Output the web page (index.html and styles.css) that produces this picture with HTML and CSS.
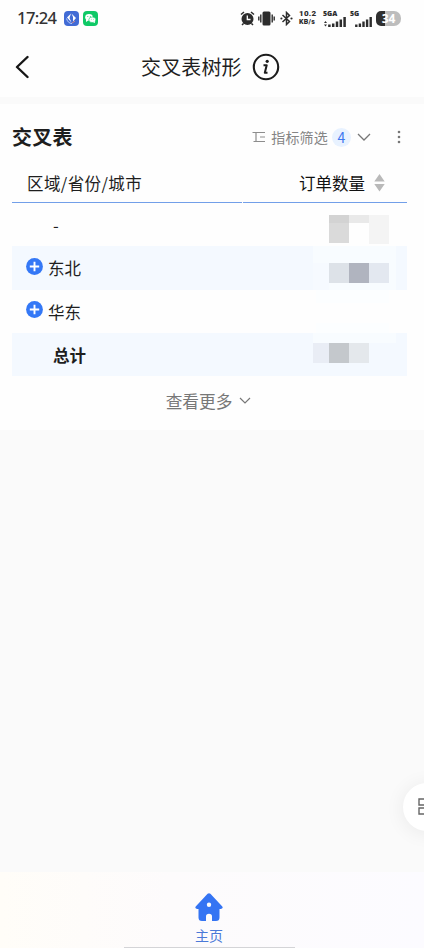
FILE: index.html
```html
<!DOCTYPE html>
<html lang="zh-CN">
<head>
<meta charset="utf-8">
<meta name="viewport" content="width=device-width, initial-scale=1">
<title>交叉表树形</title>
<link rel="stylesheet" href="styles.css">
</head>
<body>
<div class="app">
  <header class="top">
    <div class="status">
      <span class="time">17:24</span>
      <svg class="app-icon" width="15" height="15" viewBox="0 0 15 15"><rect width="15" height="15" rx="4" fill="#416bd5"/><path d="M7 2.5 3 6.5 7.5 11.5 5.5 7ZM7.5 2.5 12 7 9 10.5 9 6Z" fill="#fff"/><path d="M2.5 7.5Q4 12.5 8 12.5" fill="none" stroke="#b9cdfa"/><path d="m8 12 3-2" stroke="#d68a8c"/></svg>
      <svg class="app-icon" width="15" height="15" viewBox="0 0 15 15"><rect width="15" height="15" rx="4" fill="#0fc966"/><ellipse cx="6" cy="6.3" rx="3.8" ry="3.2" fill="#fff"/><path d="m3 8 0 3 3-2Z" fill="#fff"/><ellipse cx="9.3" cy="8.8" rx="3.5" ry="2.8" fill="#fff" stroke="#0fc966" stroke-width=".6"/><path d="m10 11 2 1 0-2Z" fill="#fff"/><g fill="#0fc966"><circle cx="4.8" cy="5.6" r=".5"/><circle cx="7.3" cy="5.6" r=".5"/><circle cx="8.3" cy="8.2" r=".4"/><circle cx="10.4" cy="8.2" r=".4"/></g></svg>
      <div class="indicators">
        <svg width="15" height="15" viewBox="0 0 15 15"><circle cx="7.5" cy="8" r="6" fill="#2c2c2c"/><path d="M1 3.5 4 1M14 3.5 11 1M3.5 12.5 2 14M11.5 12.5 13 14" stroke="#2c2c2c" stroke-width="1.5" fill="none"/><path d="M7.3 4.5V8.5H10.5" stroke="#fff" stroke-width="1.3" fill="none"/></svg>
        <svg class="vibrate" width="17" height="15" viewBox="0 0 17 15"><rect x="4.5" y=".5" width="8" height="14" rx="1.5" fill="#2c2c2c"/><path d="M2.8 3.5V11.5M14.2 3.5V11.5M.8 5.5V9.5M16.2 5.5V9.5" stroke="#2c2c2c" stroke-width="1.4"/></svg>
        <svg class="bt" width="13" height="15" viewBox="0 0 13 15"><path d="M2.5 4 9.5 10.5 6.5 13.5V1.5L9.5 4.5 2.5 11" fill="none" stroke="#2c2c2c" stroke-width="1.5"/><circle cx="1.4" cy="7.5" r="1.1" fill="#2c2c2c"/><circle cx="11.5" cy="7.5" r="1.1" fill="#2c2c2c"/></svg>
        <span class="speed"><b>10.2</b><b class="unit">KB/s</b></span>
        <span class="signal first"><b>5GA</b>
          <svg width="22" height="11" viewBox="0 0 22 11"><path d="M0 7 1.5 5 3 7ZM0 8.5l1.5 2 1.5-2Z" fill="#2c2c2c"/><path d="M5.4 11V8.5M9.2 11V7.5M13 11V5.5M16.8 11V3.5M20.6 11V1" stroke="#2c2c2c" stroke-width="2.5"/></svg>
        </span>
        <span class="signal second"><b>5G</b>
          <svg width="17" height="11" viewBox="0 0 17 11"><path d="M1.3 11V8.5M4.9 11V7.5M8.5 11V5.5M12.1 11V3.5M15.7 11V1" stroke="#2c2c2c" stroke-width="2.4"/></svg>
        </span>
        <span class="battery">34</span>
      </div>
    </div>
    <div class="nav">
      <svg class="back" width="14" height="24" viewBox="0 0 14 24"><path d="M12.5 2 2 12 12.5 22" fill="none" stroke="#161616" stroke-width="2.4" stroke-linecap="round" stroke-linejoin="round"/></svg>
      <h1>交叉表树形</h1>
      <svg class="info" width="28" height="28" viewBox="0 0 28 28"><circle cx="14" cy="14" r="12.2" fill="none" stroke="#1c1c1c" stroke-width="2.1"/><circle cx="15.2" cy="8.3" r="1.6" fill="#1c1c1c"/><path d="M11.5 12.2H14.7L12.8 19.8H15.5" fill="none" stroke="#1c1c1c" stroke-width="2" stroke-linejoin="round"/></svg>
    </div>
  </header>

  <main class="card">
    <div class="card-head">
      <h2>交叉表</h2>
      <div class="filter">
        <svg width="14" height="12" viewBox="0 0 14 12"><path d="M.5 1.5H13M4 1.5V10.5M1.5 10.5H13M8 6H13" fill="none" stroke="#8d8d8d" stroke-width="1.2"/></svg>
        <span class="filter-label">指标筛选</span>
        <span class="count">4</span>
        <svg class="chev" width="14" height="8" viewBox="0 0 14 8"><path d="M1 1 7 7 13 1" fill="none" stroke="#777" stroke-width="1.3"/></svg>
      </div>
      <svg class="more-menu" width="4" height="14" viewBox="0 0 4 14" fill="#777"><circle cx="2" cy="2" r="1.3"/><circle cx="2" cy="7" r="1.3"/><circle cx="2" cy="12" r="1.3"/></svg>
    </div>

    <div class="table">
      <div class="row head">
        <div class="cell path">区域/省份/城市</div>
        <div class="cell measure">订单数量
          <svg width="11" height="18" viewBox="0 0 11 18" fill="#b9b9b9"><path d="M5.5 0 10.7 7.5H.3ZM5.5 17.5.3 10H10.7Z"/></svg>
        </div>
      </div>
      <div class="row"><div class="cell indent">-</div>
        <svg class="mask" width="94" height="43" shape-rendering="crispEdges"><path d="M16 12h20v28H16z" fill="#dadada"/><path d="M16 12h20v8H16z" fill="#d3d3d3"/><path d="M36 12h20v8H36z" fill="#e9e9e9"/><path d="M56 12h20v29H56z" fill="#f4f4f4"/></svg>
      </div>
      <div class="row tinted"><div class="cell">
        <svg class="plus" width="17" height="17" viewBox="0 0 17 17"><circle cx="8.5" cy="8.5" r="8.4" fill="#3478f6"/><path d="M8.5 3.8V13.2M3.8 8.5H13.2" stroke="#fff" stroke-width="1.9"/></svg>东北</div>
        <svg class="mask" width="94" height="44" shape-rendering="crispEdges"><path d="M0 0h83v44H0z" fill="#f8fcff"/><path d="M0 17h16v27H0z" fill="#f6faff"/><path d="M16 17h20v20H16z" fill="#dde2e8"/><path d="M36 17h20v20H36z" fill="#b0b4bf"/><path d="M56 17h20v20H56z" fill="#e3e8f0"/></svg>
      </div>
      <div class="row"><div class="cell">
        <svg class="plus" width="17" height="17" viewBox="0 0 17 17"><circle cx="8.5" cy="8.5" r="8.4" fill="#3478f6"/><path d="M8.5 3.8V13.2M3.8 8.5H13.2" stroke="#fff" stroke-width="1.9"/></svg>华东</div>
        <svg class="mask" width="94" height="43" shape-rendering="crispEdges"><path d="M3 0h73v13H3zM3 33h73v10H3z" fill="#fcfeff"/></svg>
      </div>
      <div class="row tinted"><div class="cell indent total">总计</div>
        <svg class="mask" width="94" height="43" shape-rendering="crispEdges"><path d="M0 0h83v10H0z" fill="#f8fcff"/><path d="M0 10h16v20H0z" fill="#e9edf5"/><path d="M16 10h20v20H16z" fill="#c4c8cc"/><path d="M36 10h20v20H36z" fill="#e4e8ec"/></svg>
      </div>
    </div>
    <div class="view-more">查看更多
      <svg width="12" height="8" viewBox="0 0 12 8"><path d="m1 1 5 5 5-5" fill="none" stroke="#777" stroke-width="1.2"/></svg>
    </div>
  </main>

  <button class="float" aria-label="菜单">
    <svg width="18" height="18" viewBox="0 0 18 18" fill="none" stroke="#666" stroke-width="1.4"><path d="M1 1h6v6H1zM11 1h6v6h-6zM1 10h6v6H1zM11 10h6v6h-6z"/></svg>
  </button>

  <nav class="tabbar">
    <svg width="28" height="28" viewBox="0 0 28 28"><path fill="#3574f3" fill-rule="evenodd" d="M12.6.8Q14 -.5 15.4.8L27.3 13.4Q28.6 15.4 26 16H24.5V24.5Q24.5 28 21 28H17V23.5Q17 20.7 14 20.7T11 23.5V28H7Q3.5 28 3.5 24.5V16H2Q-.6 15.4.7 13.4ZM14 9.6a2.2 2.2 0 1 0 0 4.4 2.2 2.2 0 1 0 0-4.4Z"/></svg>
    <span>主页</span>
    <i class="home-line"></i>
  </nav>
</div>
</body>
</html>
```
FILE: styles.css
```css
* { box-sizing: border-box; }

body {
  margin: 0;
  font-family: "Noto Sans CJK SC", sans-serif;
  color: #1e1e1e;
}

h1, h2 { margin: 0; }
svg { display: block; flex: none; }

.app {
  position: relative;
  display: flex;
  flex-direction: column;
  height: 948px;
  overflow: hidden;
  background: #fafafa;
}

.top { height: 97px; background: #fefefe; }

.status {
  display: flex;
  align-items: center;
  height: 36px;
  padding-left: 17px;
}

.time {
  width: 47px;
  font: 500 16.5px/20px "Noto Sans", sans-serif;
  color: #333;
  letter-spacing: -0.55px;
}

.app-icon { margin-right: 4px; }

.indicators {
  display: flex;
  align-items: center;
  margin-left: auto;
  padding-right: 23px;
  color: #2c2c2c;
}

.vibrate { margin-left: 3px; }
.bt { margin-left: 5px; }

.speed {
  display: flex;
  flex-direction: column;
  width: 18px;
  margin-left: 6px;
  font: 700 8px/9px Roboto, sans-serif;
  letter-spacing: 0.3px;
  white-space: nowrap;
}

.speed .unit { font-size: 7px; line-height: 9px; }

.signal {
  display: flex;
  flex-direction: column;
  height: 17px;
  font: 700 7px/7px "Open Sans", sans-serif;
}

.signal.first { margin-left: 6px; }
.signal.second { margin-left: 4px; }
.signal svg { margin-top: -1px; }
.signal.first svg { margin-left: 1px; }
.signal.second svg { margin-left: 5px; }

.battery {
  width: 25px;
  height: 15px;
  margin-left: 4px;
  border-radius: 5px 7px 7px 5px;
  background: linear-gradient(90deg, #303030 34%, #bdbdbd 34%);
  color: #fff;
  font: 700 12px/15px "Open Sans", sans-serif;
  text-align: center;
}

.nav {
  display: flex;
  align-items: center;
  height: 61px;
  padding-left: 15px;
}

.back { margin-right: 112px; }

.nav h1 {
  width: 101px;
  font-size: 20px;
  line-height: 28px;
  font-weight: 400;
  letter-spacing: 0.15px;
  white-space: nowrap;
}

.info { margin-left: 10px; }

.card {
  height: 326px;
  margin-top: 7px;
  padding: 11px 17px 0 12px;
  background: #fefefe;
}

.card-head {
  display: flex;
  align-items: center;
  height: 44px;
}

.card-head h2 {
  font-size: 20px;
  line-height: 28px;
  font-weight: 700;
  letter-spacing: 0.3px;
}

.filter {
  display: flex;
  align-items: center;
  margin-left: auto;
  color: #858585;
  font-size: 14px;
}

.filter-label { margin-left: 5px; letter-spacing: 0.2px; line-height: 18px; }

.count {
  width: 19px;
  height: 19px;
  margin-left: 4px;
  border-radius: 50%;
  background: #e8f2ff;
  color: #3c78f0;
  font-size: 14px;
  line-height: 19px;
  text-align: center;
}

.chev { margin-left: 6px; }
.more-menu { margin: 0 6px 0 26px; }

.row {
  display: flex;
  justify-content: space-between;
  height: 43px;
  font-size: 16.5px;
}

.row.head {
  justify-content: flex-start;
  gap: 1px;
  height: 44px;
}

.row.head .cell {
  width: 230px;
  padding-top: 4px;
  border-bottom: 1px solid #729fe9;
}

.row.head .path { letter-spacing: 0.4px; }

.row.head .measure {
  flex: 1;
  justify-content: flex-end;
  gap: 9px;
  padding-right: 22px;
  color: #111;
}

.row.tinted { background: #f4f9ff; }
.row.tinted:nth-child(3) { height: 44px; }

.cell {
  display: flex;
  align-items: center;
  padding-left: 15px;
  white-space: nowrap;
}

.cell.indent { padding-left: 41px; }
.total { font-weight: 700; }
.plus { margin: -4px 5px 0 -1px; }

.view-more {
  display: flex;
  align-items: center;
  justify-content: center;
  gap: 7px;
  height: 50px;
  padding-right: 2px;
  color: #777;
  font-size: 16.7px;
}

.float {
  position: absolute;
  top: 783px;
  left: 403px;
  width: 48px;
  height: 48px;
  padding: 0 0 0 15px;
  border: 0;
  border-radius: 50%;
  background: #fff;
  box-shadow: 0 2px 20px rgba(0, 0, 0, 0.07);
}

.tabbar {
  position: relative;
  display: flex;
  flex-direction: column;
  align-items: center;
  height: 76px;
  margin-top: auto;
  padding: 21px 6px 0 0;
  background: linear-gradient(90deg, #fffdf8, #fdfbfc 40%, #fcfbff);
  color: #4b79d8;
  font-size: 14px;
  line-height: 20px;
}

.tabbar span { margin-top: 4px; }

.home-line {
  position: absolute;
  left: 124px;
  bottom: 0;
  width: 171px;
  height: 1px;
  background: #d4d4d7;
}
```
